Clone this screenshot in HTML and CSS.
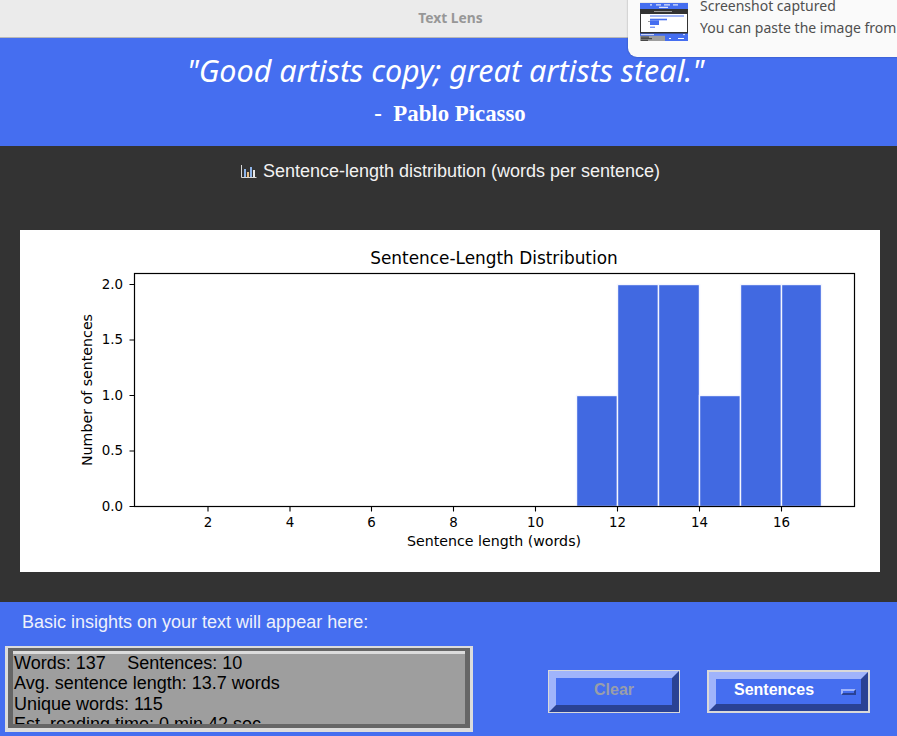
FILE: index.html
```html
<!DOCTYPE html>
<html lang="en">
<head>
<meta charset="utf-8">
<title>Text Lens</title>
<link rel="stylesheet" href="styles.css">
</head>
<body>
<div class="window">
  <header class="titlebar">Text Lens</header>
  <section class="quote">
    <p class="quote-text">"Good artists copy; great artists steal."</p>
    <p class="quote-author">-&nbsp; Pablo Picasso</p>
  </section>
  <main class="graph-area">
    <h1 class="graph-heading">
      <svg class="bars-icon" width="17" height="15" viewBox="0 0 17 15" aria-hidden="true">
        <path class="bars-axis" d="M1.5 1v12.5H16.5"/>
        <rect class="bar-a" x="4" y="5" width="2" height="8"/>
        <rect class="bar-b" x="7" y="8" width="2" height="5"/>
        <rect class="bar-a" x="10" y="3" width="2" height="10"/>
        <rect class="bar-c" x="13" y="6" width="2" height="7"/>
      </svg>
      <span>Sentence-length distribution (words per sentence)</span>
    </h1>
    <div class="chart-card">
      <svg class="chart" width="860" height="342" viewBox="0 0 860 342">
        <g class="hist">
          <rect x="556.5" y="165.5" width="41" height="111"/>
          <rect x="597.5" y="54.5" width="41" height="222"/>
          <rect x="638.5" y="54.5" width="41" height="222"/>
          <rect x="679.5" y="165.5" width="41" height="111"/>
          <rect x="720.5" y="54.5" width="41" height="222"/>
          <rect x="761.5" y="54.5" width="40" height="222"/>
        </g>
        <rect class="frame" x="114.5" y="43.5" width="720" height="233"/>
        <path class="ticks" d="M188 276.5v5M270 276.5v5M351.5 276.5v5M433.5 276.5v5M515.5 276.5v5M597.5 276.5v5M679.5 276.5v5M761.5 276.5v5M114.5 276.5h-5M114.5 221h-5M114.5 165.5h-5M114.5 110h-5M114.5 54.5h-5"/>
        <text class="chart-title" x="474" y="33.6">Sentence-Length Distribution</text>
        <g class="xticks">
          <text x="188" y="297">2</text>
          <text x="270" y="297">4</text>
          <text x="351.5" y="297">6</text>
          <text x="433.5" y="297">8</text>
          <text x="515.5" y="297">10</text>
          <text x="597.5" y="297">12</text>
          <text x="679.5" y="297">14</text>
          <text x="761.5" y="297">16</text>
        </g>
        <g class="yticks">
          <text x="103" y="280.5">0.0</text>
          <text x="103" y="225">0.5</text>
          <text x="103" y="169.5">1.0</text>
          <text x="103" y="114">1.5</text>
          <text x="103" y="58.5">2.0</text>
        </g>
        <text class="axis-label" x="474" y="316">Sentence length (words)</text>
        <text class="axis-label" transform="translate(72 160) rotate(-90)">Number of sentences</text>
      </svg>
    </div>
  </main>
  <footer class="insights">
    <p class="insights-label">Basic insights on your text will appear here:</p>
    <div class="insights-row">
      <div class="stats-outer">
        <div class="stats-inner">
          <div class="stats-text">
            <div class="stats-line">Words: 137 &nbsp;&nbsp; <span class="stats-gap">Sentences: 10</span></div>
            <div class="stats-line">Avg. sentence length: 13.7 words</div>
            <div class="stats-line">Unique words: 115</div>
            <div class="stats-line">Est. reading time: 0 min 42 sec</div>
          </div>
        </div>
      </div>
      <div class="btn-ring btn-ring-thin"><div class="btn btn-clear">Clear</div></div>
      <div class="btn-ring btn-ring-thick"><div class="btn btn-menu"><span>Sentences</span><i class="menu-indicator"></i></div></div>
    </div>
  </footer>
  <aside class="toast">
    <svg class="toast-thumb" width="48" height="39" viewBox="0 0 48 39" aria-hidden="true">
      <rect class="th-blue" width="48" height="39"/>
      <rect class="th-title" width="48" height="1"/>
      <rect class="th-white" x="10" y="2.4" width="2" height="1"/>
      <rect class="th-white" x="16" y="2.4" width="5" height="1"/>
      <rect class="th-white" x="24" y="2.4" width="6" height="1"/>
      <rect class="th-white" x="33" y="2.4" width="5" height="1"/>
      <rect class="th-white" x="19" y="4.8" width="9" height="1"/>
      <rect class="th-dark" y="7" width="48" height="24.5"/>
      <rect class="th-text" x="14" y="9" width="18" height="1"/>
      <rect class="th-white" x="1" y="12" width="46" height="18"/>
      <rect class="th-blue" x="10" y="13.5" width="34" height="1"/>
      <rect class="th-blue" x="10" y="16.7" width="17" height="1.6"/>
      <rect class="th-blue" x="10" y="18.3" width="9" height="4.7"/>
      <rect class="th-blue" x="10" y="24.7" width="5" height="1"/>
      <rect class="th-text" x="8" y="19" width="2" height="1"/>
      <rect class="th-white" x="1" y="32.3" width="13" height="0.8"/>
      <rect class="th-white" x="43" y="32.3" width="2" height="0.8"/>
      <rect class="th-gray" y="33.8" width="25" height="5.2"/>
      <rect class="th-ink" x="1" y="34.6" width="8" height="1"/>
      <rect class="th-ink" x="1" y="36.2" width="11" height="1"/>
      <rect class="th-ink" x="1" y="37.8" width="7" height="1"/>
      <rect class="th-white" x="29" y="36" width="2" height="1"/>
      <rect class="th-white" x="38" y="36" width="6" height="1"/>
    </svg>
    <div class="toast-text">
      <div class="toast-title">Screenshot captured</div>
      <div class="toast-body">You can paste the image from</div>
    </div>
  </aside>
</div>
</body>
</html>
```
FILE: styles.css
```css
* { box-sizing: border-box; }
html, body { margin: 0; padding: 0; }
body { width: 897px; height: 736px; overflow: hidden; background: #333; }
p, h1 { margin: 0; }

.window {
  position: relative;
  display: flex;
  flex-direction: column;
  width: 897px;
  height: 736px;
  overflow: hidden;
}

.titlebar {
  flex: 0 0 38px;
  display: flex;
  align-items: center;
  justify-content: center;
  padding: 0 0 2px 4px;
  background: #ebebeb;
  border-bottom: 1px solid #b8b8b8;
  color: #979797;
  font: bold 13.8px "Noto Sans", sans-serif;
}

.quote {
  flex: 0 0 108px;
  display: flex;
  flex-direction: column;
  align-items: center;
  background: #456ef0;
  color: #fff;
  padding-top: 10px;
}
.quote-text {
  padding-right: 6px;
  font: italic 30.5px/44px "Noto Sans", sans-serif;
}
.quote-author {
  margin-top: 7px;
  padding-left: 3px;
  font: bold 22.8px/29px "Liberation Serif", serif;
}

.graph-area {
  flex: 0 0 456px;
  background: #333;
  padding: 12px 17px 30px 20px;
}
.graph-heading {
  display: flex;
  align-items: center;
  justify-content: center;
  gap: 6px;
  height: 26px;
  color: #f2f2f2;
  font: normal 18px/26px "Liberation Sans", sans-serif;
}
.bars-icon { flex: none; }
.bars-axis { fill: none; stroke: #d8d8d8; stroke-width: 1; }
.bar-a { fill: #8fb4e8; }
.bar-b { fill: #e8c08a; }
.bar-c { fill: #e8e8e8; }

.chart-card {
  width: 860px;
  height: 342px;
  margin-top: 46px;
  background: #fff;
}
.chart { display: block; }
.hist rect { fill: #4169e1; stroke: #f4f6fe; stroke-width: 1.4; }
.frame { fill: none; stroke: #000; stroke-width: 1.2; }
.ticks { fill: none; stroke: #000; stroke-width: 1.1; }
.chart text { font-family: "DejaVu Sans", sans-serif; fill: #000; }
.chart-title { font-size: 16.9px; text-anchor: middle; }
.xticks text { font-size: 13.4px; text-anchor: middle; }
.yticks text { font-size: 13.4px; text-anchor: end; }
.axis-label { font-size: 14.2px; text-anchor: middle; }

.insights {
  flex: 0 0 134px;
  background: #456ef0;
  padding: 8px 0 0 5px;
}
.insights-label {
  height: 36px;
  padding-left: 17px;
  color: #eef1fb;
  font: 18px/24px "Liberation Sans", sans-serif;
}
.insights-row {
  display: flex;
  align-items: flex-start;
}

.stats-outer {
  width: 468px;
  height: 86px;
  border-style: solid;
  border-color: #dcdcdc;
  border-width: 2px 3px 4px 3px;
}
.stats-inner {
  height: 100%;
  border-style: solid;
  border-color: #666;
  border-width: 3px 5px 4px 5px;
}
.stats-text {
  height: 100%;
  overflow: hidden;
  background: #9e9e9e;
  border-top: 3px solid #dcdcdc;
  padding: 0 0 0 1px;
  color: #000;
  font: 18px/20.4px "Liberation Sans", sans-serif;
}
.stats-line { white-space: nowrap; position: relative; top: -1px; }
.stats-gap { margin-left: 1.5px; }

.btn-ring {
  margin-top: 24px;
  height: 43px;
  border-style: solid;
  border-color: #d9d9d9;
}
.btn-ring-thin { width: 132px; margin-left: 75px; border-width: 1px; }
.btn-ring-thick { width: 163px; margin-left: 27px; border-width: 2px; }

.btn {
  display: flex;
  align-items: center;
  height: 100%;
  padding-bottom: 4px;
  background: #456ef0;
  border-style: solid;
  border-width: 7px;
  border-color: #a0b4fb #2a4294 #2a4294 #a0b4fb;
  font: bold 16px/20px "Liberation Sans", sans-serif;
}
.btn-clear {
  justify-content: center;
  color: #999eaa;
}
.btn-menu {
  justify-content: space-between;
  color: #fff;
  padding-left: 18px;
}
.menu-indicator {
  display: block;
  width: 15px;
  height: 6px;
  margin-top: 5px;
  margin-right: 5px;
  border-style: solid;
  border-width: 2px;
  border-color: #a0b4fb #2a4294 #2a4294 #a0b4fb;
  background: #456ef0;
}

.toast {
  position: absolute;
  top: -10px;
  left: 628px;
  width: 300px;
  height: 67px;
  display: flex;
  align-items: flex-start;
  padding: 12px 0 0 12px;
  background: #fafafa;
  border-radius: 0 0 0 9px;
  box-shadow: 0 0 2px rgba(0, 0, 0, 0.35);
}
.toast-thumb { flex: none; display: block; }
.th-blue { fill: #456ef0; }
.th-title { fill: #ebebeb; }
.th-white { fill: #fff; }
.th-dark { fill: #333; }
.th-text { fill: #999; }
.th-gray { fill: #9e9e9e; }
.th-ink { fill: #333; }
.toast-text {
  margin-left: 12px;
  margin-top: -7px;
  color: #4f4f4f;
  font: 14px/22px "Noto Sans", sans-serif;
  white-space: nowrap;
}
```
